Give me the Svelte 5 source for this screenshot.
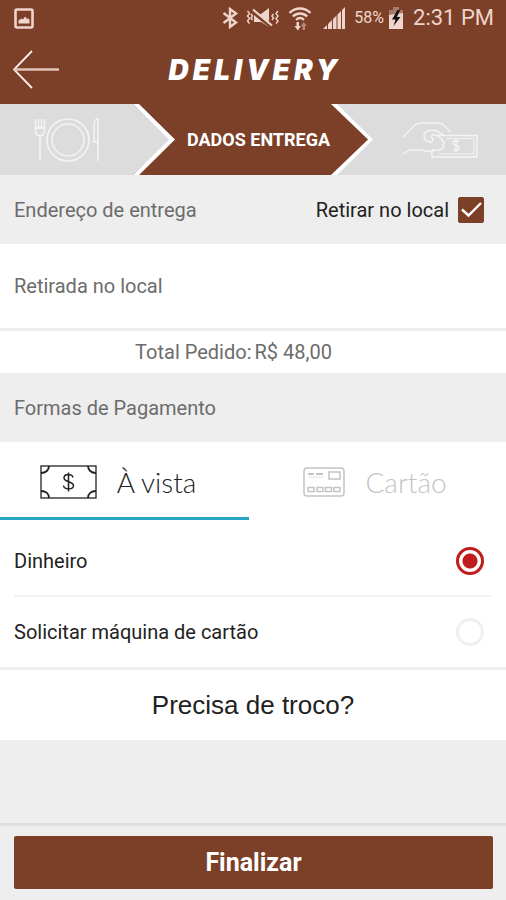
<script>
  let pickup = $state(true);
  let tab = $state('cash');
  let payment = $state('dinheiro');

  const options = [
    { id: 'dinheiro', label: 'Dinheiro' },
    { id: 'maquina', label: 'Solicitar máquina de cartão' }
  ];
</script>

<div class="app">
  <div class="status">
    <svg class="photo" width="20" height="21" viewBox="0 0 20 21" aria-hidden="true">
      <rect x="1.5" y="1.5" width="17" height="18" rx="1.5" fill="none" stroke="currentColor" stroke-width="2.6" />
      <path d="M4.5 15.500v-3l3-2 1.500 1 2-3 2 2.500 1.500-.8 1 1.800v3.500z" fill="currentColor" />
    </svg>
    <div class="indicators">
      <svg width="16" height="22" viewBox="0 0 16 22" fill="none" stroke="currentColor" stroke-width="2.400" aria-hidden="true">
        <path d="M1.500 6l12.500 9.500L8 20V2l6 4.500L1.500 16" />
      </svg>
      <svg width="34" height="22" viewBox="0 0 34 22" aria-hidden="true">
        <path d="M8 7h7l8-6v19L15 15H8z" fill="currentColor" />
        <path d="M6 4l20 16" stroke="#7c3f28" stroke-width="4" />
        <path d="M7 2.500l19 16" stroke="currentColor" stroke-width="2.200" />
        <path d="M1.500 4l2 2.500-2 2.500 2 2.500-2 2.500 2 2.500M5 7l1.500 2L5 11l1.500 2M32 4l-2 2.500 2 2.500-2 2.500 2 2.500-2 2.500M27.500 7L26 9l1.500 2-1.500 2" fill="none" stroke="currentColor" stroke-width="1.400" />
      </svg>
      <svg width="24" height="25" viewBox="0 0 24 25" aria-hidden="true">
        <g fill="none" stroke="currentColor" stroke-width="2.400">
          <path d="M1.500 7c6-6 15-6 21 0" />
          <path d="M4.800 10.500c4.200-4 10.200-4 14.400 0" />
          <path d="M8 13.800c2.500-2.200 5.500-2.200 8 0" />
        </g>
        <path d="M8.500 16h2.500v4h2l-3.200 4.500L6.500 20h2z" fill="currentColor" />
        <path d="M14.500 24h2.500v-4h1.800l-3-4-3 4h1.700z" fill="currentColor" opacity=".5" />
      </svg>
      <svg class="signal" width="24" height="23" viewBox="0 0 24 23" aria-hidden="true">
        <path d="M1 22l4-4v4zM6 17l4-4v9H6zM11 12l3.500-3.500V22H11zM15.500 7.500L19 4v18h-3.500zM20 3l3-3v22h-3z" fill="currentColor" />
      </svg>
      <span class="percent">58%</span>
      <svg width="14" height="22" viewBox="0 0 14 22" aria-hidden="true">
        <path d="M4 0h6v3H4z" fill="currentColor" opacity=".4" />
        <path d="M0 3h14v7H0z" fill="currentColor" opacity=".4" />
        <path d="M0 8l14-2v16H0z" fill="currentColor" />
        <path d="M8.500 3L3 12.500h3.500L4.500 19l7-9H8l3-7z" fill="#111" />
      </svg>
      <span class="time">2:31 PM</span>
    </div>
  </div>

  <header>
    <button class="back" aria-label="Voltar">
      <svg width="48" height="40" viewBox="0 0 48 40" fill="none" stroke="#fbeee9" aria-hidden="true">
        <path d="M20 1L2 19.500 20 38" stroke-width="1.800" />
        <path d="M2 19.500h45" stroke-width="2.600" stroke="#e3c4b8" />
      </svg>
    </button>
    <h1>DELIVERY</h1>
  </header>

  <nav class="steps" aria-label="Etapas">
    <button class="step" aria-label="Pedido">
      <svg width="66" height="46" viewBox="0 0 66 46" fill="none" stroke="#f4f4f4" stroke-width="1.500" aria-hidden="true">
        <circle cx="34" cy="23" r="21" />
        <circle cx="34" cy="23" r="16" />
        <path d="M1.500 2v12c0 3 2 4.500 4.500 4.500s4.500-1.500 4.500-4.500V2M4.500 2v10M7.500 2v10M1.500 11h9M6 18.500V44" />
        <path d="M64 44V2c-3 0-4 3-4 6v17h4" />
      </svg>
    </button>
    <svg class="edge" width="42" height="71" viewBox="0 0 42 71" aria-hidden="true">
      <path d="M0 0L37 35.500 0 71z" fill="#dcdcdc" />
      <path d="M0 0h6L42 35.500 6 71H0l36-35.500z" fill="#fff" />
    </svg>
    <span class="current" aria-current="step">DADOS ENTREGA</span>
    <svg class="edge" width="42" height="71" viewBox="0 0 42 71" aria-hidden="true">
      <path d="M0 0h42v71H0z" fill="#dcdcdc" />
      <path d="M0 0h6l36 35.500L6 71H0z" fill="#fff" />
      <path d="M0 0l37 35.500L0 71z" fill="#7c3f28" />
    </svg>
    <button class="step" aria-label="Pagamento">
      <svg width="76" height="38" viewBox="0 0 76 38" fill="none" stroke="#f4f4f4" stroke-width="1.500" stroke-linejoin="round" aria-hidden="true">
        <path d="M1 16L13 4c2-2 4-2 7-2h16c4 0 7 2 12 9" />
        <path d="M1 33l6-4h14c4 2 8 2 12 0" />
        <path d="M34 10c-6-2-12 0-12 5 0 4 4 7 8 6l1-3c-3-2-1-5 3-4l6 4v2c2 0 3 2 1 4 1 3-1 5-4 5h-7" />
        <path d="M35 14.500h40V36H30v-7" />
        <path d="M44 17.500h28V33H36" stroke-width="1" />
        <path d="M33 9c4 1 5 4 9 5" />
        <path d="M57 21c-1-2-6-2-6 1s6 2 6 5-5 3-6 1M54 18v13" />
      </svg>
    </button>
  </nav>

  <main>
    <section class="bar">
      <h2>Endereço de entrega</h2>
      <label class="pickup">
        <span>Retirar no local</span>
        <span class="check">
          <input type="checkbox" bind:checked={pickup} />
          {#if pickup}
            <svg width="26" height="26" viewBox="0 0 26 26" aria-hidden="true">
              <path d="M4 12.500l6.500 6L23 6" fill="none" stroke="#fff" stroke-width="2.400" />
            </svg>
          {/if}
        </span>
      </label>
    </section>

    <p class="address">Retirada no local</p>

    <p class="total"><span>Total Pedido:</span><span>R$ 48,00</span></p>

    <section class="bar">
      <h2>Formas de Pagamento</h2>
    </section>

    <div class="tabs" role="tablist">
      <button role="tab" class:active={tab === 'cash'} aria-selected={tab === 'cash'} onclick={() => (tab = 'cash')}>
        <svg width="57" height="34" viewBox="0 0 57 34" fill="none" stroke="currentColor" stroke-width="1.300" aria-hidden="true">
          <rect x="1" y="1" width="55" height="32" />
          <path d="M9 1c0 4-3 7-8 7M48 1c0 4 3 7 8 7M9 33c0-4-3-7-8-7M48 33c0-4 3-7 8-7" stroke-width="1.800" />
          <path d="M33 12.500c-1-4-9-4-9 .5s9.500 3 9.500 7.500-9.500 4.500-10 0M28.500 7.500v19" stroke-width="1.500" />
        </svg>
        <span>À vista</span>
      </button>
      <button role="tab" class:active={tab === 'card'} aria-selected={tab === 'card'} onclick={() => (tab = 'card')}>
        <svg width="42" height="30" viewBox="0 0 42 30" fill="none" stroke="currentColor" stroke-width="1.500" aria-hidden="true">
          <rect x="1" y="1" width="40" height="28" rx="3" />
          <rect x="26" y="5" width="11" height="7" />
          <path d="M5 7h6M13 7h7" stroke-width="2" />
          <path d="M5 10h15" stroke-width="1" opacity=".5" />
          <path d="M5 20.500h6v4H5zM14 20.500h6v4h-6zM22.500 20.500h6v4h-6zM31 20.500h6v4h-6z" />
        </svg>
        <span>Cartão</span>
      </button>
    </div>

    <div class="options">
      {#each options as option (option.id)}
        <label class="option">
          <span>{option.label}</span>
          <input type="radio" name="payment" value={option.id} bind:group={payment} />
        </label>
      {/each}
    </div>

    <button class="change">Precisa de troco?</button>
  </main>

  <footer>
    <button class="finish">Finalizar</button>
  </footer>
</div>

<style>
  :global(body) {
    background: #eeeeee;
  }

  .app {
    --brown: #7c3f28;
    --line: #eeeeee;
    display: flex;
    flex-direction: column;
    min-height: 100vh;
    background: #eeeeee;
    color: #222;
    font-family: Roboto, sans-serif;
    font-size: 20px;
    line-height: 24px;
  }

  button {
    margin: 0;
    padding: 0;
    border: 0;
    background: none;
    color: inherit;
    font: inherit;
    cursor: pointer;
  }

  svg {
    display: block;
    flex: none;
  }

  h1, h2, p {
    margin: 0;
    font-weight: 400;
  }

  .status {
    display: flex;
    align-items: center;
    justify-content: space-between;
    height: 36px;
    padding: 0 12px 0 14px;
    background: var(--brown);
    color: #efd5cb;
  }

  .indicators {
    display: flex;
    align-items: center;
    gap: 8px;
  }

  .signal {
    margin-left: 2px;
  }

  .percent {
    margin-right: -3px;
    font-size: 16px;
  }

  .time {
    margin-left: 2px;
    font-size: 22px;
  }

  header {
    display: grid;
    grid-template-columns: 60px 1fr 60px;
    align-items: center;
    height: 68px;
    background: var(--brown);
  }

  .back {
    padding-left: 12px;
  }

  h1 {
    padding-left: 4px;
    color: #fff;
    font-family: Inter, "Liberation Sans", sans-serif;
    font-size: 28px;
    font-style: italic;
    font-weight: 900;
    letter-spacing: 4px;
    line-height: 32px;
    text-align: center;
  }

  .steps {
    display: flex;
    height: 71px;
    background: var(--brown);
  }

  .step {
    display: flex;
    flex: 1;
    align-items: center;
    justify-content: center;
    background: #dcdcdc;
  }

  .current {
    display: flex;
    align-items: center;
    width: 144px;
    padding-left: 12px;
    color: #fff;
    font-size: 18px;
    font-weight: 700;
    white-space: nowrap;
  }

  .bar {
    display: flex;
    align-items: center;
    justify-content: space-between;
    height: 69px;
    padding: 0 22px 0 14px;
    background: #eeeeee;
  }

  h2 {
    color: #6c6c6c;
    font-size: 20px;
  }

  .pickup {
    display: flex;
    align-items: center;
    gap: 9px;
  }

  .check {
    display: grid;
  }

  .check > * {
    grid-area: 1 / 1;
  }

  .check svg {
    pointer-events: none;
  }

  .check input {
    width: 26px;
    height: 26px;
    margin: 0;
    appearance: none;
    border: 1px solid var(--brown);
    border-radius: 2px;
  }

  .check input:checked {
    background: var(--brown);
  }

  .address {
    padding: 30px 14px;
    background: #fff;
    border-bottom: 3px solid var(--line);
    color: #6c6c6c;
  }

  .total {
    display: flex;
    justify-content: center;
    gap: 3px;
    padding: 9px 39px 9px 0;
    background: #fff;
    color: #6c6c6c;
  }

  .tabs {
    display: flex;
    gap: 8px;
    background: #fff;
  }

  .tabs button {
    display: flex;
    flex: 1;
    align-items: center;
    justify-content: center;
    gap: 20px;
    height: 78px;
    padding: 4px 13px 0 0;
    box-sizing: border-box;
    border-bottom: 3px solid transparent;
    color: #c4c4c4;
    font-family: Lato, sans-serif;
    font-size: 28px;
    font-weight: 300;
  }

  .tabs button.active {
    border-bottom-color: #27a5c4;
    color: #222;
  }

  .options {
    padding: 0 14px;
    background: #fff;
    border-bottom: 3px solid var(--line);
  }

  .option {
    display: flex;
    align-items: center;
    justify-content: space-between;
    height: 70px;
    padding: 0 8px 0 0;
    box-sizing: border-box;
  }

  .option:first-child {
    height: 77px;
    padding-top: 6px;
    border-bottom: 2px solid #f3f3f3;
  }

  .option input {
    width: 28px;
    height: 28px;
    margin: 0;
    box-sizing: border-box;
    appearance: none;
    border: 3px solid #f0f0f0;
    border-radius: 50%;
  }

  .option input:checked {
    border-color: #c01c1c;
    background: radial-gradient(circle, #c01c1c 7px, transparent 8px);
  }

  .change {
    width: 100%;
    padding: 23px 14px;
    background: #fff;
    font-family: "Liberation Sans", Arial, sans-serif;
    font-size: 26px;
  }

  footer {
    margin-top: auto;
    padding: 10px 13px 11px 14px;
    border-top: 3px solid #dedede;
  }

  .finish {
    width: 100%;
    height: 53px;
    border-radius: 2px;
    background: var(--brown);
    color: #fff;
    font-size: 25px;
    font-weight: 700;
  }
</style>
